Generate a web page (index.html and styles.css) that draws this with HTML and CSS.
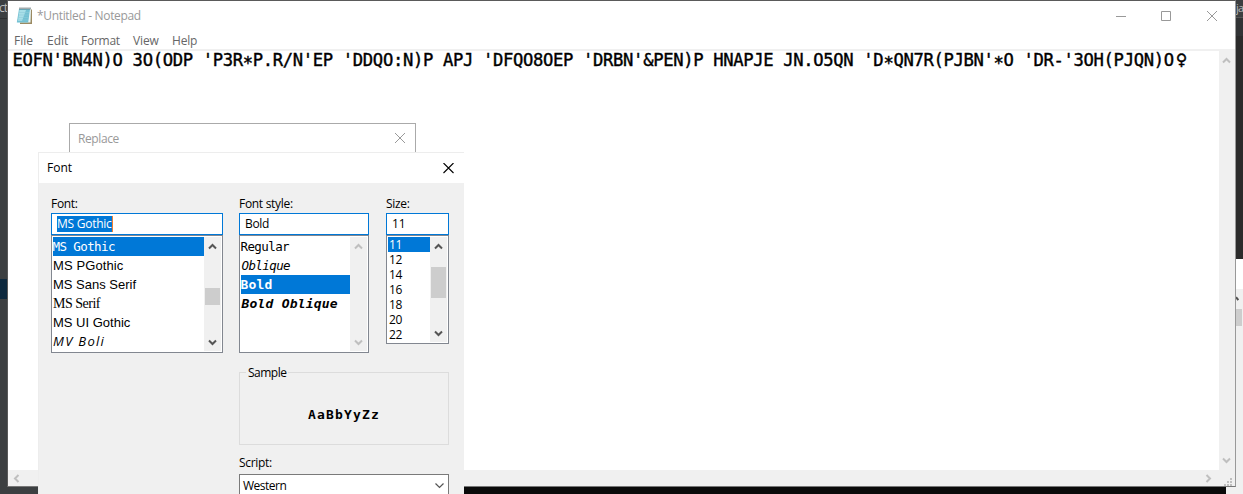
FILE: index.html
```html
<!DOCTYPE html>
<html lang="en">
<head>
<meta charset="utf-8">
<title>*Untitled - Notepad</title>
<link rel="stylesheet" href="styles.css">
</head>
<body>
<div class="desktop">
  <div class="back-left"><span class="back-text">ct</span></div>
  <div class="back-selection"></div>
  <div class="taskbar"></div>
  <div class="back-right"><span class="back-text">ja</span></div>
  <div class="back-panel">
    <div class="back-scroll"><svg class="back-arrow" width="3" height="6" viewBox="0 0 3 6"><path d="M0 1.2L2.3 4" fill="none" stroke="#505050" stroke-width="2"/></svg><div class="back-thumb"></div></div>
  </div>

  <section class="notepad">
    <header class="titlebar">
      <svg class="app-icon" width="17" height="18" viewBox="0 0 17 18">
        <path d="M4 2.5H16V17H4z" fill="#9b8a62"/>
        <path d="M3.5 2H15L14.5 15.5H2z" fill="#e9f6f8"/>
        <path d="M3 2H14L12.2 15.5H.8z" fill="#73c1d3"/>
        <path d="M3.5 3H10L6 14H2z" fill="#a8dfe8"/>
        <path d="M3 5.5H13M2.7 8H12.8M2.2 10.5H12.4M1.8 13H12" stroke="#8fcbd8" stroke-width=".6"/>
        <path d="M3.5 1.5H15" stroke="#46575b" stroke-width="2" stroke-dasharray="1 1"/>
      </svg>
      <h1 class="title">*Untitled - Notepad</h1>
      <div class="controls">
        <svg width="11" height="11" viewBox="0 0 11 11"><path d="M1 5.5H11"/></svg>
        <svg width="11" height="11" viewBox="0 0 11 11"><path d="M.5.5H9.5V9.5H.5z"/></svg>
        <svg width="11" height="11" viewBox="0 0 11 11"><path d="M0 0L10 10M10 0L0 10"/></svg>
      </div>
    </header>
    <nav class="menu"><span class="m-file">File</span><span class="m-edit">Edit</span><span class="m-format">Format</span><span class="m-view">View</span><span class="m-help">Help</span></nav>
    <div class="workspace">
      <pre class="editor">EOFN'BN4N)O 3O(ODP 'P3R<span class="star">*</span>P.R/N'EP 'DDQO:N)P APJ 'DFQO8OEP 'DRBN'&amp;PEN)P HNAPJE JN.O5QN 'D<span class="star">*</span>QN7R(PJBN'<span class="star">*</span>O 'DR-'3OH(PJQN)O<span class="female">♀</span></pre>
      <div class="vscroll faint">
        <svg width="9" height="7" viewBox="0 0 9 7"><path d="M1 5.5L4.5 2L8 5.5"/></svg>
        <svg width="9" height="7" viewBox="0 0 9 7"><path d="M1 1.5L4.5 5L8 1.5"/></svg>
      </div>
    </div>
    <div class="hscroll faint">
      <svg width="7" height="9" viewBox="0 0 7 9"><path d="M5.5 1L2 4.5L5.5 8"/></svg>
      <svg class="right-arrow" width="7" height="9" viewBox="0 0 7 9"><path d="M1.5 1L5 4.5L1.5 8"/></svg>
      <svg class="grip" width="8" height="8" viewBox="0 0 8 8"><path d="M6 0h2v2H6zM3 3h2v2H3zM6 3h2v2H6zM0 6h2v2H0zM3 6h2v2H3zM6 6h2v2H6z"/></svg>
    </div>
  </section>

  <section class="replace">
    <span class="replace-title">Replace</span>
    <svg width="11" height="11" viewBox="0 0 11 11"><path d="M0 0L10 10M10 0L0 10" stroke="#999" fill="none"/></svg>
  </section>

  <section class="dialog">
    <header class="dialog-title"><span class="dlg-name">Font</span>
      <svg width="11" height="11" viewBox="0 0 11 11"><path d="M.5 0L10.5 10M10.5 0L.5 10" stroke="#000" stroke-width="1.1" fill="none"/></svg>
    </header>
    <div class="columns">
      <div class="col font-col">
        <label class="l-font">Font:</label>
        <div class="field"><span class="picked">MS Gothic</span></div>
        <div class="list tall">
          <ul>
            <li class="selected f-mono">MS Gothic</li>
            <li class="f-pgothic">MS PGothic</li>
            <li class="f-sans">MS Sans Serif</li>
            <li class="f-serif">MS Serif</li>
            <li class="f-ui">MS UI Gothic</li>
            <li class="f-boli">MV Boli</li>
          </ul>
          <div class="bar">
            <svg width="9" height="7" viewBox="0 0 9 7"><path d="M1 5.5L4.5 2L8 5.5"/></svg>
            <div class="thumb font-thumb"></div>
            <svg width="9" height="7" viewBox="0 0 9 7"><path d="M1 1.5L4.5 5L8 1.5"/></svg>
          </div>
        </div>
      </div>
      <div class="right-side">
        <div class="pair">
          <div class="col style-col">
            <label class="l-style">Font style:</label>
            <div class="field"><span class="v-bold">Bold</span></div>
            <div class="list tall">
              <ul>
                <li class="f-mono">Regular</li>
                <li class="f-mono oblique">Oblique</li>
                <li class="f-mono bold selected">Bold</li>
                <li class="f-mono bold oblique">Bold Oblique</li>
              </ul>
              <div class="bar faint">
                <svg width="9" height="7" viewBox="0 0 9 7"><path d="M1 5.5L4.5 2L8 5.5"/></svg>
                <svg width="9" height="7" viewBox="0 0 9 7"><path d="M1 1.5L4.5 5L8 1.5"/></svg>
              </div>
            </div>
          </div>
          <div class="col size-col">
            <label class="l-size">Size:</label>
            <div class="field"><span>11</span></div>
            <div class="list short">
              <ul><li class="selected">11</li><li>12</li><li>14</li><li>16</li><li>18</li><li>20</li><li>22</li></ul>
              <div class="bar">
                <svg width="9" height="7" viewBox="0 0 9 7"><path d="M1 5.5L4.5 2L8 5.5"/></svg>
                <div class="thumb size-thumb"></div>
                <svg width="9" height="7" viewBox="0 0 9 7"><path d="M1 1.5L4.5 5L8 1.5"/></svg>
              </div>
            </div>
          </div>
        </div>
        <div class="sample"><span class="legend">Sample</span><span class="sample-text">AaBbYyZz</span></div>
        <label class="l-script">Script:</label>
        <div class="combo"><span class="western">Western</span>
          <svg width="11" height="7" viewBox="0 0 11 7"><path d="M1.5 1.5L5.5 5.5L9.5 1.5" fill="none" stroke="#555" stroke-width="1.2"/></svg>
        </div>
      </div>
    </div>
  </section>
</div>
</body>
</html>
```
FILE: styles.css
```css
* { box-sizing: border-box; }
body { margin: 0; }
svg { display: block; flex: none; }
ul { list-style: none; margin: 0; padding: 0; }

.desktop {
  position: relative;
  width: 1243px;
  height: 494px;
  overflow: hidden;
  background: #3c3f41;
  font: 12px/16px "Open Sans", "Noto Sans", sans-serif;
  color: #000;
}

/* Windows behind the notepad */
.back-left { position: absolute; left: 0; top: 0; width: 8px; height: 19px; border-bottom: 1px solid #2d2f30; overflow: hidden; }
.back-text { color: #bbb; font-size: 12px; line-height: 15px; }
.back-left .back-text { margin-left: -1px; letter-spacing: -1px; }
.back-right .back-text { font-size: 11px; letter-spacing: -.8px; margin-left: 1px; }
.back-selection { position: absolute; left: 0; top: 279px; width: 8px; height: 20px; background: #0d293e; }
.taskbar { position: absolute; left: 464px; top: 487px; width: 762px; height: 7px; background: #0a0a0a; }
.back-right { position: absolute; left: 1235px; top: 0; width: 8px; height: 259px; background: linear-gradient(#3c3f41 0 17px, #555 17px 18px, #313335 18px 36px, #2b2b2b 36px); }
.back-panel { position: absolute; left: 1226px; top: 259px; width: 17px; height: 235px; padding: 30px 0 0 10px; background: linear-gradient(#fff 30px, #f0f0f0 30px); }
.back-arrow { margin-top: 6px; }
.back-scroll { padding-top: 1px; }
.back-thumb { width: 6px; height: 17px; margin-top: 7px; background: #cdcdcd; }

/* Notepad */
.notepad {
  position: absolute; left: 7px; top: 0; width: 1229px; height: 487px;
  display: flex; flex-direction: column;
  border: 1px solid #5a5a5a; border-right-color: #999; border-bottom-color: #777;
  background: #fff;
}
.titlebar { display: flex; align-items: center; height: 30px; padding-left: 8px; }
.title { margin: 0 0 0 4px; font-size: 12px; font-weight: 400; letter-spacing: -.33px; color: #999; }
.controls { display: flex; gap: 35px; margin: 0 17px 0 auto; }
.controls path { fill: none; stroke: #999; }
.menu { display: flex; height: 18px; padding: 2px 0 0 6px; color: #666; }
.m-file { width: 33px; }
.m-edit { width: 34px; }
.m-format { width: 52px; letter-spacing: -.25px; }
.m-view { width: 39px; letter-spacing: -.1px; }
.m-help { letter-spacing: -.2px; }
.workspace { display: flex; flex: none; height: 421px; border-top: 2px solid #f0f0f0; }
.editor {
  flex: 1; margin: 0; padding-left: 4px;
  font: 17.2px/19px "DejaVu Sans Mono", monospace;
  letter-spacing: -.338px;
  text-indent: .5px;
  -webkit-text-stroke: .4px #000;
}
.star { position: relative; top: 3px; }
.female { margin-left: 2px; font-size: 19px; line-height: 16px; letter-spacing: 0; }
.vscroll { width: 16px; padding: 6px 5px 6px 3px; display: flex; flex-direction: column; justify-content: space-between; background: #f0f0f0; }
.hscroll { flex: 1; min-height: 0; display: flex; align-items: center; padding: 0 3px 0 5px; background: #f0f0f0; }
.faint path { fill: none; stroke: #bfbfbf; stroke-width: 2; }
.right-arrow { margin-left: auto; }
.grip { margin: 7px 0 0 12px; }
.faint .grip path { fill: #bfbfbf; stroke: none; }

/* Replace window */
.replace {
  position: absolute; left: 69px; top: 123px; width: 347px; height: 31px;
  display: flex; align-items: center; justify-content: space-between;
  padding: 0 9px 0 8px; border: 1px solid #aaa; background: #fff; color: #999;
}
.replace-title { letter-spacing: -.4px; }

/* Font dialog */
.dialog { position: absolute; left: 38px; top: 152px; width: 426px; height: 342px; border: solid #ededed; border-width: 1px 0 0 1px; background: #f0f0f0; }
.dialog-title { display: flex; align-items: center; justify-content: space-between; height: 30px; padding: 0 10px 0 8px; background: #fff; }
.columns { display: flex; padding: 13px 0 0 12px; gap: 16px; }
.col label, .l-script { display: block; height: 17px; line-height: 16px; letter-spacing: -.3px; }
.font-col { width: 172px; }
.style-col { width: 130px; }
.size-col { width: 63px; }
.pair { display: flex; gap: 17px; height: 158px; }
.field { display: flex; align-items: center; height: 22px; padding-left: 5px; border: 1px solid #0078d7; background: #fff; }
.picked { height: 16px; background: #0078d7; color: #fff; border-right: 1px solid #f08030; letter-spacing: -.25px; }
.v-bold { letter-spacing: -.3px; }
.list { display: flex; justify-content: space-between; padding: 1px; border: 1px solid #828790; background: #fff; }
.tall { height: 118px; }
.short { height: 109px; }
.list ul { flex: 1; }
.list li { white-space: nowrap; }
.tall li { height: 19px; line-height: 19px; }
.short li { height: 15px; line-height: 15px; padding-left: 1px; letter-spacing: -.4px; }
.list .selected { background: #0078d7; color: #fff; }
.tall .f-mono { font-family: "DejaVu Sans Mono", monospace; font-size: 12.5px; letter-spacing: -.6px; text-indent: -.5px; }
.f-pgothic, .f-sans, .f-ui { font-family: "Liberation Sans", sans-serif; font-size: 13px; }
.f-pgothic { letter-spacing: .1px; }
.f-serif { font-family: "Liberation Serif", serif; font-size: 14px; letter-spacing: -.5px; }
.f-boli { font-size: 13px; font-style: italic; letter-spacing: 1.3px; }
.tall .oblique { font-style: italic; padding-left: 1px; }
.tall .bold { font-weight: 700; font-size: 13px; letter-spacing: .2px; }
.bar { width: 17px; padding: 6px 4px 5px; display: flex; flex-direction: column; background: #f0f0f0; }
.bar path { fill: none; stroke: #555; stroke-width: 2; }
.bar.faint path { stroke: #bfbfbf; }
.bar svg:last-child { margin-top: auto; }
.thumb { width: 15px; margin-left: -3px; background: #cdcdcd; }
.font-thumb { height: 17px; margin-top: 38px; }
.size-thumb { height: 31px; margin-top: 17px; }
.sample { display: flex; justify-content: center; align-items: center; position: relative; height: 73px; margin-top: 18px; padding-top: 12px; border: 1px solid #dcdcdc; }
.legend { position: absolute; left: 6px; top: -8px; padding: 0 2px; background: #f0f0f0; letter-spacing: -.5px; }
.sample-text { font: 700 13px/16px "DejaVu Sans Mono", monospace; letter-spacing: 1.15px; }
.l-script { margin-top: 10px; height: 19px; }
.combo { display: flex; justify-content: space-between; align-items: center; height: 23px; padding: 0 3px; border: 1px solid #7a7a7a; background: #fff; }
.western { letter-spacing: -.5px; }
```
